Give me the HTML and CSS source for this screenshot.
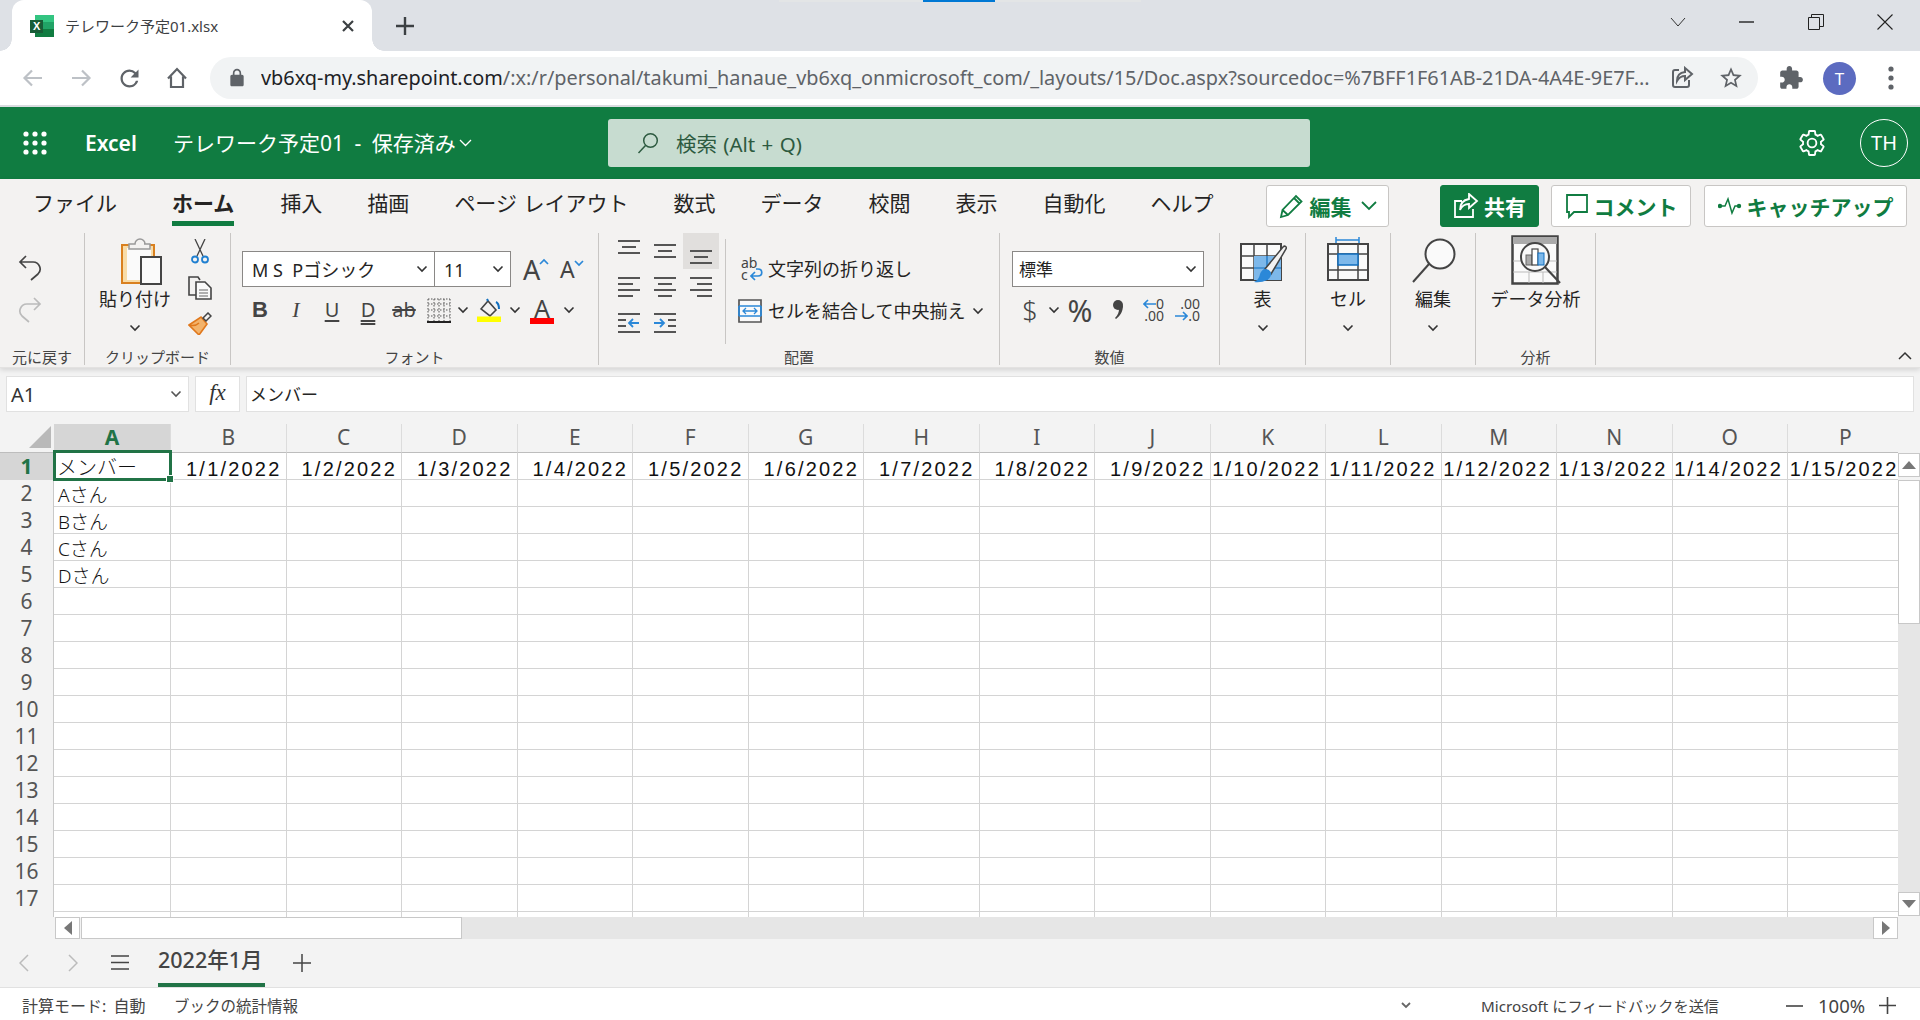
FILE: index.html
```html
<!DOCTYPE html>
<html lang="ja">
<head>
<meta charset="utf-8">
<title>テレワーク予定01.xlsx</title>
<link rel="stylesheet" href="styles.css">
</head>
<body>
<div class="loadbar"><span class="loadbar-fill"></span></div>

<header class="tabstrip">
  <div class="tab">
    <svg class="favicon" width="24" height="22" viewBox="0 0 24 22"><rect x="5" width="19" height="8" fill="#33c481"/><rect x="5" y="7" width="19" height="8" fill="#21a366"/><rect x="5" y="14" width="19" height="8" fill="#107c41"/><rect y="5" width="13" height="13" fill="#185c37"/><text x="3" y="15" class="fav-x">X</text></svg>
    <span class="tab-title">テレワーク予定01.xlsx</span>
    <svg class="tab-close" width="14" height="14" viewBox="0 0 14 14"><path d="M2 2l10 10M12 2L2 12" stroke="#3c4043" stroke-width="2.2"/></svg>
  </div>
  <svg class="newtab" width="18" height="18" viewBox="0 0 18 18"><path d="M9 0v18M0 9h18" stroke="#3c4043" stroke-width="2.4"/></svg>
  <div class="winctl">
    <svg width="16" height="10" viewBox="0 0 16 10"><path d="M1 1l7 8 7-8" fill="none" stroke="#333" stroke-width="1"/></svg>
    <svg width="16" height="16" viewBox="0 0 16 16"><path d="M0 8h15" stroke="#222" stroke-width="1.4"/></svg>
    <svg width="16" height="16" viewBox="0 0 16 16"><path d="M.5 3.5h11v12H.5zM3.500 3.500v-3h12v12h-4" fill="none" stroke="#222"/></svg>
    <svg width="16" height="16" viewBox="0 0 16 16"><path d="M.5.5l15 15M15.500.5l-15 15" stroke="#222" stroke-width="1.100"/></svg>
  </div>
</header>

<nav class="toolbar">
  <svg class="tb tb-back" width="24" height="24" viewBox="0 0 24 24"><path d="M21 12H4M11 4.500L3.500 12l7.500 7.500" fill="none" stroke="#bdc1c6" stroke-width="2.200"/></svg>
  <svg class="tb tb-fwd" width="24" height="24" viewBox="0 0 24 24"><path d="M3 12h17M13 4.500l7.500 7.500-7.500 7.500" fill="none" stroke="#bdc1c6" stroke-width="2.200"/></svg>
  <svg class="tb tb-reload" width="27" height="27" viewBox="0 0 24 24"><path fill="#5f6368" d="M17.650 6.350A7.958 7.958 0 0 0 12 4c-4.420 0-7.990 3.580-7.990 8s3.570 8 7.990 8c3.730 0 6.840-2.550 7.730-6h-2.080A5.990 5.990 0 0 1 12 18c-3.310 0-6-2.690-6-6s2.690-6 6-6c1.660 0 3.140.690 4.220 1.780L13 11h7V4l-2.350 2.350z"/></svg>
  <svg class="tb tb-home" width="24" height="24" viewBox="0 0 24 24"><path d="M3 12.500L12 3l9 9.500M6 10.500V21h12V10.500" fill="none" stroke="#5f6368" stroke-width="2.200"/></svg>
  <div class="omnibox">
    <svg class="lock" width="20" height="20" viewBox="0 0 24 24"><path fill="#5f6368" d="M18 8h-1V6c0-2.760-2.240-5-5-5S7 3.240 7 6v2H6c-1.100 0-2 .9-2 2v10c0 1.100.9 2 2 2h12c1.100 0 2-.9 2-2V10c0-1.100-.9-2-2-2zM9 6c0-1.660 1.340-3 3-3s3 1.340 3 3v2H9V6z"/></svg>
    <span class="url"><span class="url-host">vb6xq-my.sharepoint.com</span>/:x:/r/personal/takumi_hanaue_vb6xq_onmicrosoft_com/_layouts/15/Doc.aspx?sourcedoc=%7BFF1F61AB-21DA-4A4E-9E7F...</span>
    <svg class="omni-share" width="24" height="24" viewBox="0 0 24 24"><path d="M9 4H5a2 2 0 0 0-2 2v13a2 2 0 0 0 2 2h12a2 2 0 0 0 2-2v-5" fill="none" stroke="#5f6368" stroke-width="2"/><path d="M15 2l7 6-7 6v-4c-4 0-6 1.500-8 5 0-5 3-8.500 8-9z" fill="none" stroke="#5f6368" stroke-width="2"/></svg>
    <svg class="omni-star" width="26" height="26" viewBox="0 0 24 24"><path fill="#5f6368" d="M22 9.240l-7.190-.62L12 2 9.190 8.630 2 9.240l5.460 4.730L5.820 21 12 17.270 18.180 21l-1.630-7.030L22 9.240zM12 15.400l-3.760 2.270 1-4.280-3.320-2.880 4.380-.38L12 6.100l1.710 4.040 4.380.38-3.320 2.880 1 4.280L12 15.400z"/></svg>
  </div>
  <svg class="tb-ext" width="26" height="26" viewBox="0 0 24 24"><path fill="#5f6368" d="M20.500 11H19V7c0-1.100-.9-2-2-2h-4V3.500C13 2.120 11.880 1 10.500 1S8 2.120 8 3.500V5H4c-1.100 0-1.990.9-1.990 2v3.800H3.500c1.490 0 2.700 1.210 2.700 2.700s-1.210 2.700-2.700 2.700H2V20c0 1.100.9 2 2 2h3.800v-1.500c0-1.490 1.210-2.700 2.700-2.700 1.490 0 2.700 1.210 2.700 2.700V22H17c1.100 0 2-.9 2-2v-4h1.500c1.380 0 2.500-1.120 2.500-2.500S21.880 11 20.500 11z"/></svg>
  <span class="avatar">T</span>
  <svg class="tb-menu" width="8" height="24" viewBox="0 0 8 24"><circle cx="4" cy="3" r="2.600" fill="#5f6368"/><circle cx="4" cy="12" r="2.600" fill="#5f6368"/><circle cx="4" cy="21" r="2.600" fill="#5f6368"/></svg>
</nav>

<section class="appbar">
  <svg class="waffle" width="24" height="24" viewBox="0 0 24 24" fill="#fff"><circle cx="3" cy="3" r="2.600"/><circle cx="12" cy="3" r="2.600"/><circle cx="21" cy="3" r="2.600"/><circle cx="3" cy="12" r="2.600"/><circle cx="12" cy="12" r="2.600"/><circle cx="21" cy="12" r="2.600"/><circle cx="3" cy="21" r="2.600"/><circle cx="12" cy="21" r="2.600"/><circle cx="21" cy="21" r="2.600"/></svg>
  <span class="appname">Excel</span>
  <span class="docname">テレワーク予定01 - 保存済み</span>
  <svg class="docchev" width="13" height="8" viewBox="0 0 13 8"><path d="M1 1l5.500 5.500L12 1" fill="none" stroke="#fff" stroke-width="1.300"/></svg>
  <div class="search">
    <svg width="24" height="24" viewBox="0 0 24 24"><circle cx="14.500" cy="9.500" r="6.800" fill="none" stroke="#2d5a40" stroke-width="1.500"/><path d="M9.500 14.500L2.500 22" stroke="#2d5a40" stroke-width="1.500"/></svg>
    <span>検索 (Alt + Q)</span>
  </div>
  <svg class="gear" width="30" height="30" viewBox="0 0 24 24"><path fill="none" stroke="#fff" stroke-width="1.500" d="M19.140 12.940c.04-.3.06-.61.06-.94 0-.32-.02-.64-.07-.94l2.030-1.580c.18-.14.23-.41.12-.61l-1.920-3.320c-.12-.22-.37-.29-.59-.22l-2.390.96c-.5-.38-1.030-.7-1.620-.94l-.36-2.540c-.04-.24-.24-.41-.48-.41h-3.840c-.24 0-.43.17-.47.41l-.36 2.540c-.59.24-1.130.57-1.620.94l-2.390-.96c-.22-.08-.47 0-.59.22L2.740 8.870c-.12.21-.08.47.12.61l2.030 1.580c-.05.3-.09.63-.09.94s.02.64.07.94l-2.030 1.580c-.18.14-.23.41-.12.61l1.920 3.320c.12.22.37.29.59.22l2.390-.96c.5.38 1.030.7 1.620.94l.36 2.540c.05.24.24.41.48.41h3.840c.24 0 .44-.17.47-.41l.36-2.540c.59-.24 1.130-.56 1.620-.94l2.390.96c.22.08.47 0 .59-.22l1.920-3.320c.12-.22.07-.47-.12-.61l-2.010-1.580z"/><circle cx="12" cy="12" r="3.500" fill="none" stroke="#fff" stroke-width="1.500"/></svg>
  <span class="me">TH</span>
</section>

<section class="ribbon">
  <div class="rtabs">
    <span class="rtab rtab-first">ファイル</span>
    <span class="rtab rtab-on">ホーム</span>
    <span class="rtab">挿入</span>
    <span class="rtab">描画</span>
    <span class="rtab rtab-page">ページ レイアウト</span>
    <span class="rtab">数式</span>
    <span class="rtab">データ</span>
    <span class="rtab">校閲</span>
    <span class="rtab">表示</span>
    <span class="rtab">自動化</span>
    <span class="rtab">ヘルプ</span>
    <div class="ractions">
      <button class="act act-edit"><svg width="26" height="26" viewBox="0 0 26 26"><path d="M2 24l1.500-7L17 3l5.500 5.500L9 22zM3.500 17L9 22M15 5l5.500 5.500" fill="none" stroke="#107c41" stroke-width="1.800"/></svg>編集<svg class="act-chev" width="16" height="10" viewBox="0 0 16 10"><path d="M1 1l7 7 7-7" fill="none" stroke="#107c41" stroke-width="1.800"/></svg></button>
      <button class="act act-share"><svg width="26" height="26" viewBox="0 0 26 26"><path d="M9 8H2v16h18v-8" fill="none" stroke="#fff" stroke-width="1.800"/><path d="M16 1l8 7-8 7v-4c-4 0-7 1.500-9 6 0-6 3-10 9-11z" fill="none" stroke="#fff" stroke-width="1.800"/></svg>共有</button>
      <button class="act act-comment"><svg width="24" height="26" viewBox="0 0 24 26"><path d="M2 2h20v17H9l-5 5v-5H2z" fill="none" stroke="#107c41" stroke-width="1.800"/></svg>コメント</button>
      <button class="act act-catch"><svg width="24" height="18" viewBox="0 0 24 18"><path d="M1 9h6l3-7 4 14 3-7h6" fill="none" stroke="#107c41" stroke-width="1.500"/><circle cx="2" cy="9" r="2.200" fill="#107c41"/><circle cx="21" cy="9" r="2.200" fill="#107c41"/></svg>キャッチアップ</button>
    </div>
  </div>

  <div class="rgroups">
    <div class="grp grp-undo">
      <div class="grp-body undo-body">
        <svg width="24" height="26" viewBox="0 0 24 26"><path d="M8 1L2 7l6 6M2 7h13a7 7 0 0 1 5 12l-7 6" fill="none" stroke="#444" stroke-width="1.700"/></svg>
        <svg width="24" height="26" viewBox="0 0 24 26"><path d="M16 1l6 6-6 6M22 7H9a7 7 0 0 0-5 12l7 6" fill="none" stroke="#bbb" stroke-width="1.700"/></svg>
      </div>
      <div class="grp-label">元に戻す</div>
    </div>

    <div class="grp grp-clip">
      <div class="grp-body clip-body">
        <div class="tall tall-paste">
          <svg class="tall-ico paste-ico" width="42" height="52" viewBox="0 0 42 52"><rect x="2" y="12" width="32" height="38" fill="#f8dca8" stroke="#d9801f" stroke-width="2"/><rect x="7" y="15" width="24" height="32" fill="#fafafa"/><path d="M12 15v-5h6a5 5 0 0 1 10 0h-1 6v5z" transform="translate(-3 1)" fill="#f3f2f1" stroke="#999" stroke-width="1.500"/><rect x="21" y="24" width="20" height="27" fill="#fafafa" stroke="#444" stroke-width="2"/></svg>
          <span class="tall-label">貼り付け</span>
          <svg class="chev" width="12" height="8" viewBox="0 0 12 8"><path d="M1.500 1.500L6 6l4.500-4.500" fill="none" stroke="#333" stroke-width="1.600"/></svg>
        </div>
        <div class="clip-small">
          <svg width="18" height="25" viewBox="0 0 18 25"><path d="M4 0l8 17M14 0L6 17" stroke="#444" stroke-width="1.300"/><circle cx="4" cy="20.500" r="3" fill="none" stroke="#1f7fd0" stroke-width="1.800"/><circle cx="14" cy="20.500" r="3" fill="none" stroke="#1f7fd0" stroke-width="1.800"/></svg>
          <svg width="24" height="24" viewBox="0 0 24 24"><path d="M8 19H1V1h9l2 3" fill="none" stroke="#444" stroke-width="1.600"/><path d="M8 6h9l6 6v11H8z" fill="#fafafa" stroke="#444" stroke-width="1.600"/><path d="M11 14h9M11 17h9M11 20h9" stroke="#666" stroke-width="1.200"/></svg>
          <svg width="24" height="23" viewBox="0 0 24 23"><path d="M1 13L13 5l6 7-8 11z" fill="#f3b36b" stroke="#e0781c" stroke-width="1.600"/><path d="M1 13c4 1 7 1 10-2" fill="none" stroke="#e0781c" stroke-width="1.500"/><path d="M15 6l5-5 3 3-5 5z" fill="#f3f2f1" stroke="#444" stroke-width="1.500"/></svg>
        </div>
      </div>
      <div class="grp-label">クリップボード</div>
    </div>

    <div class="grp grp-font">
      <div class="grp-body font-body">
        <div class="font-row1">
          <div class="combo combo-font"><span class="combo-text">M S  Pゴシック</span><svg class="chev" width="12" height="8" viewBox="0 0 12 8"><path d="M1.500 1.500L6 6l4.500-4.500" fill="none" stroke="#333" stroke-width="1.600"/></svg></div>
          <div class="combo combo-size"><span class="combo-text">11</span><svg class="chev" width="12" height="8" viewBox="0 0 12 8"><path d="M1.500 1.500L6 6l4.500-4.500" fill="none" stroke="#333" stroke-width="1.600"/></svg></div>
          <span class="grow grow-up">A<svg width="10" height="7" viewBox="0 0 10 7"><path d="M1 6l4-4 4 4" fill="none" stroke="#2b88d8" stroke-width="1.700"/></svg></span>
          <span class="grow grow-down">A<svg width="10" height="7" viewBox="0 0 10 7"><path d="M1 1l4 4 4-4" fill="none" stroke="#2b88d8" stroke-width="1.700"/></svg></span>
        </div>
        <div class="font-row2">
          <span class="fbtn f-b">B</span>
          <span class="fbtn f-i">I</span>
          <span class="fbtn f-u">U</span>
          <span class="fbtn f-d">D</span>
          <span class="fbtn f-s">ab</span>
          <span class="fbtn f-ico"><svg width="24" height="25" viewBox="0 0 24 25"><path d="M1 1h22M1 6h22M1 12h22M1 18h22M1 1v22M7 1v22M12 1v22M17 1v22M23 1v22" fill="none" stroke="#555" stroke-width="1" stroke-dasharray="1.500 1.500"/><path d="M0 24h24" stroke="#222" stroke-width="2"/></svg></span>
          <svg class="chev fchev" width="12" height="8" viewBox="0 0 12 8"><path d="M1.500 1.500L6 6l4.500-4.500" fill="none" stroke="#333" stroke-width="1.600"/></svg>
          <span class="fbtn f-ico f-fill"><svg width="24" height="24" viewBox="0 0 24 24"><path d="M4 11l7-8 8 9-6 6z" fill="none" stroke="#444" stroke-width="1.600"/><path d="M11 3l-1-2M19 4c2 1 3 3 3 7" fill="none" stroke="#106ebe" stroke-width="2"/><path d="M0 18.500h24V24H0z" fill="#ffff00"/></svg></span>
          <svg class="chev fchev" width="12" height="8" viewBox="0 0 12 8"><path d="M1.500 1.500L6 6l4.500-4.500" fill="none" stroke="#333" stroke-width="1.600"/></svg>
          <span class="fbtn f-color">A</span>
          <svg class="chev fchev" width="12" height="8" viewBox="0 0 12 8"><path d="M1.500 1.500L6 6l4.500-4.500" fill="none" stroke="#333" stroke-width="1.600"/></svg>
        </div>
      </div>
      <div class="grp-label">フォント</div>
    </div>

    <div class="grp grp-align">
      <div class="grp-body align-body">
        <div class="align-grid">
          <span class="abtn"><svg width="24" height="30" viewBox="0 0 24 30"><path d="M1 5h22M5 11h14M1 17h22" stroke="#555" stroke-width="2"/></svg></span>
          <span class="abtn"><svg width="24" height="30" viewBox="0 0 24 30"><path d="M1 9h22M5 15h14M1 21h22" stroke="#555" stroke-width="2"/></svg></span>
          <span class="abtn abtn-on"><svg width="24" height="30" viewBox="0 0 24 30"><path d="M1 15h22M5 21h14M1 27h22" stroke="#555" stroke-width="2"/></svg></span>
          <span class="abtn"><svg width="24" height="24" viewBox="0 0 24 24"><path d="M1 3h22M1 9h15M1 15h22M1 21h15" stroke="#555" stroke-width="2"/></svg></span>
          <span class="abtn"><svg width="24" height="24" viewBox="0 0 24 24"><path d="M1 3h22M5 9h14M1 15h22M5 21h14" stroke="#555" stroke-width="2"/></svg></span>
          <span class="abtn"><svg width="24" height="24" viewBox="0 0 24 24"><path d="M1 3h22M8 9h15M1 15h22M8 21h15" stroke="#555" stroke-width="2"/></svg></span>
          <span class="abtn"><svg width="24" height="24" viewBox="0 0 24 24"><path d="M1 3h22M1 21h22M1 9h8M1 15h8" stroke="#555" stroke-width="2"/><path d="M22 12H12M16 8l-4 4 4 4" fill="none" stroke="#2b88d8" stroke-width="1.800"/></svg></span>
          <span class="abtn"><svg width="24" height="24" viewBox="0 0 24 24"><path d="M1 3h22M1 21h22M15 9h8M15 15h8" stroke="#555" stroke-width="2"/><path d="M1 12h10M7 8l4 4-4 4" fill="none" stroke="#2b88d8" stroke-width="1.800"/></svg></span>
        </div>
        <div class="wrap-col">
          <div class="wrap-row wrap-text"><span class="abc">ab<br>c<svg width="14" height="14" viewBox="0 0 14 14"><path d="M2 9h6c5 0 5-7 0-7H6M5 5L1 9l4 4" fill="none" stroke="#2b88d8" stroke-width="1.700"/></svg></span><span class="lbl">文字列の折り返し</span></div>
          <div class="wrap-row wrap-merge"><svg width="24" height="24" viewBox="0 0 24 24"><path d="M1 1h22v22H1z" fill="#fafafa" stroke="#555" stroke-width="1.700"/><path d="M1 7h22M1 17h22" stroke="#2b88d8" stroke-width="1.700"/><path d="M1 7v10M23 7v10" stroke="#2b88d8" stroke-width="1.700"/><path d="M5 12h14M8 9l-3 3 3 3M16 9l3 3-3 3" fill="none" stroke="#2b88d8" stroke-width="1.300"/></svg><span class="lbl">セルを結合して中央揃え</span><svg class="chev" width="12" height="8" viewBox="0 0 12 8"><path d="M1.500 1.500L6 6l4.500-4.500" fill="none" stroke="#333" stroke-width="1.600"/></svg></div>
        </div>
      </div>
      <div class="grp-label">配置</div>
    </div>

    <div class="grp grp-num">
      <div class="grp-body num-body">
        <div class="combo combo-num"><span class="combo-text">標準</span><svg class="chev" width="12" height="8" viewBox="0 0 12 8"><path d="M1.500 1.500L6 6l4.500-4.500" fill="none" stroke="#333" stroke-width="1.600"/></svg></div>
        <div class="num-row">
          <span class="n-dollar">$</span>
          <svg class="chev" width="12" height="8" viewBox="0 0 12 8"><path d="M1.500 1.500L6 6l4.500-4.500" fill="none" stroke="#333" stroke-width="1.600"/></svg>
          <span class="n-pct">%</span>
          <svg class="n-comma" width="14" height="24" viewBox="0 0 14 24"><circle cx="7" cy="7" r="5" fill="#444"/><path d="M12 7c0 7-3 11-7 14l-1-1c3-3 4-6 4-9z" fill="#444"/></svg>
          <div class="dec dec-a">
            <div class="dec-row"><svg width="13" height="10" viewBox="0 0 13 10"><path d="M13 5H1M5 1L1 5l4 4" fill="none" stroke="#2b88d8" stroke-width="1.600"/></svg><span>0</span></div>
            <div class="dec-row"><span>.00</span></div>
          </div>
          <div class="dec dec-b">
            <div class="dec-row"><span>.00</span></div>
            <div class="dec-row"><svg width="13" height="10" viewBox="0 0 13 10"><path d="M0 5h12M8 1l4 4-4 4" fill="none" stroke="#2b88d8" stroke-width="1.600"/></svg><span>.0</span></div>
          </div>
        </div>
      </div>
      <div class="grp-label">数値</div>
    </div>

    <div class="grp grp-tall grp-table">
      <div class="grp-body">
        <div class="tall">
          <svg class="tall-ico" width="48" height="52" viewBox="0 0 48 52"><rect x="2" y="11" width="40" height="36" fill="#fafafa" stroke="#444" stroke-width="2"/><path d="M15 11v36M28 11v36M2 23h40M2 35h40" stroke="#444" stroke-width="1.500"/><rect x="15" y="23" width="27" height="24" fill="#7db8ea"/><path d="M28 23v24M15 35h27" stroke="#106ebe" stroke-width="1.200"/><path d="M26 36L44 14c2-2 4 0 3 2L32 41z" fill="#f3f2f1" stroke="#444" stroke-width="1.500"/><path d="M26 36c4 0 7 3 6 6-1 5-8 8-17 7 4-2 5-4 6-8 1-3 3-5 5-5z" fill="#2b88d8"/></svg>
          <span class="tall-label">表</span>
          <svg class="chev" width="12" height="8" viewBox="0 0 12 8"><path d="M1.500 1.500L6 6l4.500-4.500" fill="none" stroke="#333" stroke-width="1.600"/></svg>
        </div>
      </div>
      <div class="grp-label">&nbsp;</div>
    </div>

    <div class="grp grp-tall grp-cell">
      <div class="grp-body">
        <div class="tall">
          <svg class="tall-ico" width="44" height="52" viewBox="0 0 44 52"><path d="M10 4v6M33 4v6M10 7h23" fill="none" stroke="#2b88d8" stroke-width="1.500"/><rect x="2" y="11" width="40" height="36" fill="#fafafa" stroke="#444" stroke-width="2"/><path d="M12 11v36M32 11v36M2 21h40M2 37h40" stroke="#444" stroke-width="1.500"/><rect x="12" y="21" width="20" height="11" fill="#7db8ea" stroke="#106ebe" stroke-width="1.500"/></svg>
          <span class="tall-label">セル</span>
          <svg class="chev" width="12" height="8" viewBox="0 0 12 8"><path d="M1.500 1.500L6 6l4.500-4.500" fill="none" stroke="#333" stroke-width="1.600"/></svg>
        </div>
      </div>
      <div class="grp-label">&nbsp;</div>
    </div>

    <div class="grp grp-tall grp-edit">
      <div class="grp-body">
        <div class="tall">
          <svg class="tall-ico" width="46" height="52" viewBox="0 0 46 52"><circle cx="30" cy="21" r="14.500" fill="#fafafa" stroke="#444" stroke-width="2"/><path d="M19 31L3 49" stroke="#444" stroke-width="2"/></svg>
          <span class="tall-label">編集</span>
          <svg class="chev" width="12" height="8" viewBox="0 0 12 8"><path d="M1.500 1.500L6 6l4.500-4.500" fill="none" stroke="#333" stroke-width="1.600"/></svg>
        </div>
      </div>
      <div class="grp-label">&nbsp;</div>
    </div>

    <div class="grp grp-tall grp-ana">
      <div class="grp-body">
        <div class="tall">
          <svg class="tall-ico" width="50" height="52" viewBox="0 0 50 52"><rect x="1.500" y="3.500" width="45" height="47" fill="#fafafa" stroke="#444" stroke-width="2.500"/><rect x="2" y="4" width="44" height="7" fill="#aaa"/><path d="M2 28h44M2 39h44M18 39v11M32 39v11" stroke="#bbb"/><circle cx="24" cy="24" r="14" fill="#f8f8f8" stroke="#444" stroke-width="2"/><path d="M34 34l15 16" stroke="#444" stroke-width="2.200"/><rect x="15" y="22" width="6" height="10" fill="#aaa" stroke="#666"/><rect x="21" y="16" width="6" height="16" fill="#fff" stroke="#444" stroke-width="1.200"/><rect x="27" y="20" width="6" height="12" fill="#7db8ea" stroke="#106ebe"/></svg>
          <span class="tall-label">データ分析</span>
        </div>
      </div>
      <div class="grp-label">分析</div>
    </div>

    <div class="collapse"><svg width="14" height="9" viewBox="0 0 14 9"><path d="M1 8l6-6 6 6" fill="none" stroke="#333" stroke-width="1.500"/></svg></div>
  </div>
</section>

<section class="fbar">
  <div class="namebox"><span>A1</span><svg class="chev" width="12" height="8" viewBox="0 0 12 8"><path d="M1.500 1.500L6 6l4.500-4.500" fill="none" stroke="#555" stroke-width="1.600"/></svg></div>
  <div class="fxbtn">fx</div>
  <div class="finput">メンバー</div>
</section>

<main class="book">
  <div class="sheet">
    <div class="corner"><svg width="22" height="22" viewBox="0 0 22 22"><path d="M22 0v22H0z" fill="#b9b9b9"/></svg></div>
    <div class="ch ch-on">A</div><div class="ch">B</div><div class="ch">C</div><div class="ch">D</div><div class="ch">E</div><div class="ch">F</div><div class="ch">G</div><div class="ch">H</div><div class="ch">I</div><div class="ch">J</div><div class="ch">K</div><div class="ch">L</div><div class="ch">M</div><div class="ch">N</div><div class="ch">O</div><div class="ch">P</div>

    <div class="rh rh-on">1</div><div class="c c-jp">メンバー</div><div class="c c-d">1/1/2022</div><div class="c c-d">1/2/2022</div><div class="c c-d">1/3/2022</div><div class="c c-d">1/4/2022</div><div class="c c-d">1/5/2022</div><div class="c c-d">1/6/2022</div><div class="c c-d">1/7/2022</div><div class="c c-d">1/8/2022</div><div class="c c-d">1/9/2022</div><div class="c c-d">1/10/2022</div><div class="c c-d">1/11/2022</div><div class="c c-d">1/12/2022</div><div class="c c-d">1/13/2022</div><div class="c c-d">1/14/2022</div><div class="c c-d">1/15/2022</div>

    <div class="rh">2</div><div class="c c-t">Aさん</div><i></i><i></i><i></i><i></i><i></i><i></i><i></i><i></i><i></i><i></i><i></i><i></i><i></i><i></i><i></i>
    <div class="rh">3</div><div class="c c-t">Bさん</div><i></i><i></i><i></i><i></i><i></i><i></i><i></i><i></i><i></i><i></i><i></i><i></i><i></i><i></i><i></i>
    <div class="rh">4</div><div class="c c-t">Cさん</div><i></i><i></i><i></i><i></i><i></i><i></i><i></i><i></i><i></i><i></i><i></i><i></i><i></i><i></i><i></i>
    <div class="rh">5</div><div class="c c-t">Dさん</div><i></i><i></i><i></i><i></i><i></i><i></i><i></i><i></i><i></i><i></i><i></i><i></i><i></i><i></i><i></i>
    <div class="rh">6</div><i></i><i></i><i></i><i></i><i></i><i></i><i></i><i></i><i></i><i></i><i></i><i></i><i></i><i></i><i></i><i></i>
    <div class="rh">7</div><i></i><i></i><i></i><i></i><i></i><i></i><i></i><i></i><i></i><i></i><i></i><i></i><i></i><i></i><i></i><i></i>
    <div class="rh">8</div><i></i><i></i><i></i><i></i><i></i><i></i><i></i><i></i><i></i><i></i><i></i><i></i><i></i><i></i><i></i><i></i>
    <div class="rh">9</div><i></i><i></i><i></i><i></i><i></i><i></i><i></i><i></i><i></i><i></i><i></i><i></i><i></i><i></i><i></i><i></i>
    <div class="rh">10</div><i></i><i></i><i></i><i></i><i></i><i></i><i></i><i></i><i></i><i></i><i></i><i></i><i></i><i></i><i></i><i></i>
    <div class="rh">11</div><i></i><i></i><i></i><i></i><i></i><i></i><i></i><i></i><i></i><i></i><i></i><i></i><i></i><i></i><i></i><i></i>
    <div class="rh">12</div><i></i><i></i><i></i><i></i><i></i><i></i><i></i><i></i><i></i><i></i><i></i><i></i><i></i><i></i><i></i><i></i>
    <div class="rh">13</div><i></i><i></i><i></i><i></i><i></i><i></i><i></i><i></i><i></i><i></i><i></i><i></i><i></i><i></i><i></i><i></i>
    <div class="rh">14</div><i></i><i></i><i></i><i></i><i></i><i></i><i></i><i></i><i></i><i></i><i></i><i></i><i></i><i></i><i></i><i></i>
    <div class="rh">15</div><i></i><i></i><i></i><i></i><i></i><i></i><i></i><i></i><i></i><i></i><i></i><i></i><i></i><i></i><i></i><i></i>
    <div class="rh">16</div><i></i><i></i><i></i><i></i><i></i><i></i><i></i><i></i><i></i><i></i><i></i><i></i><i></i><i></i><i></i><i></i>
    <div class="rh">17</div><i></i><i></i><i></i><i></i><i></i><i></i><i></i><i></i><i></i><i></i><i></i><i></i><i></i><i></i><i></i><i></i>
    <div class="rh rh-empty"></div><i></i><i></i><i></i><i></i><i></i><i></i><i></i><i></i><i></i><i></i><i></i><i></i><i></i><i></i><i></i><i></i>

    <div class="selection"><span class="sel-handle"></span></div>
  </div>
  <div class="vbar">
    <div class="sb-btn sb-v"><svg width="14" height="8" viewBox="0 0 14 8"><path d="M7 0l7 8H0z" fill="#777"/></svg></div>
    <div class="vthumb"></div>
    <div class="vtrack"></div>
    <div class="sb-btn sb-v"><svg width="14" height="8" viewBox="0 0 14 8"><path d="M7 8L0 0h14z" fill="#777"/></svg></div>
  </div>
</main>

<div class="hbar">
  <div class="sb-btn sb-h"><svg width="8" height="14" viewBox="0 0 8 14"><path d="M0 7l8-7v14z" fill="#777"/></svg></div>
  <div class="hthumb"></div>
  <div class="htrack"></div>
  <div class="sb-btn sb-h"><svg width="8" height="14" viewBox="0 0 8 14"><path d="M8 7L0 0v14z" fill="#777"/></svg></div>
</div>

<div class="sheetbar">
  <svg class="st-prev" width="10" height="18" viewBox="0 0 10 18"><path d="M9 1L1 9l8 8" fill="none" stroke="#bbb" stroke-width="1.500"/></svg>
  <svg class="st-next" width="10" height="18" viewBox="0 0 10 18"><path d="M1 1l8 8-8 8" fill="none" stroke="#bbb" stroke-width="1.500"/></svg>
  <svg class="st-menu" width="18" height="15" viewBox="0 0 18 15"><path d="M0 1h18M0 7.500h18M0 14h18" stroke="#444" stroke-width="1.600"/></svg>
  <span class="st-tab">2022年1月</span>
  <svg class="st-add" width="18" height="18" viewBox="0 0 18 18"><path d="M9 0v18M0 9h18" stroke="#444" stroke-width="1.500"/></svg>
</div>

<footer class="status">
  <span class="st-mode">計算モード: 自動</span>
  <span class="st-info">ブックの統計情報</span>
  <svg class="st-chev" width="10" height="7" viewBox="0 0 10 7"><path d="M1 1l4 4 4-4" fill="none" stroke="#666" stroke-width="1.800"/></svg>
  <span class="st-fb">Microsoft にフィードバックを送信</span>
  <svg class="st-minus" width="17" height="2" viewBox="0 0 17 2"><path d="M0 1h17" stroke="#444" stroke-width="1.600"/></svg>
  <span class="st-zoom">100%</span>
  <svg class="st-plus" width="17" height="17" viewBox="0 0 17 17"><path d="M8.500 0v17M0 8.500h17" stroke="#444" stroke-width="1.600"/></svg>
</footer>
</body>
</html>
```

FILE: styles.css
```css
* { box-sizing: border-box; }
html, body { margin: 0; height: 100%; }
body {
  width: 1920px; height: 1020px; overflow: hidden; background: #fff; position: relative;
  font-family: "Noto Sans", "Noto Sans CJK JP", sans-serif; color: #252423;
}
svg { display: block; flex: none; }

/* Browser chrome */
.loadbar { position: absolute; left: 779px; top: 0; width: 362px; height: 2px; background: #e3e5e6; z-index: 3; }
.loadbar-fill { display: block; margin-left: 144px; width: 72px; height: 2px; background: #0078d4; }
.tabstrip { height: 51px; background: #dee1e6; display: flex; align-items: flex-start; padding-left: 12px; }
.tab { position: relative; width: 360px; height: 51px; background: #fff; border-radius: 12px 12px 0 0; display: flex; align-items: center; padding-left: 18px; }
.tab::before, .tab::after { content: ""; position: absolute; bottom: 0; width: 12px; height: 12px; }
.tab::before { left: -12px; background: radial-gradient(circle at 0 0, #dee1e6 11.5px, #fff 12px); }
.tab::after { right: -12px; background: radial-gradient(circle at 100% 0, #dee1e6 11.5px, #fff 12px); }
.fav-x { font: bold 11px "Liberation Sans", sans-serif; fill: #fff; }
.tab-title { margin-left: 11px; font-size: 15px; line-height: 20px; color: #3c4043; width: 276px; white-space: nowrap; }
.newtab { margin: 17px 0 0 24px; }
.winctl { margin-left: auto; display: flex; align-items: center; gap: 53px; padding: 14px 27px 0 0; height: 30px; }
.toolbar { height: 56px; border-bottom: 2px solid #dadce0; background: #fff; display: flex; align-items: center; padding-left: 21px; }
.tb-fwd { margin-left: 24px; }
.tb-reload { margin-left: 23px; }
.tb-home { margin-left: 22px; }
.omnibox { margin-left: 21px; width: 1548px; height: 42px; border-radius: 21px; background: #f1f3f4; display: flex; align-items: center; padding-left: 17px; }
.url { margin-left: 14px; width: 1388px; white-space: nowrap; overflow: hidden; font-size: 19.860px; line-height: 28px; color: #5f6368; }
.url-host { color: #202124; }
.omni-share { margin-left: 21px; }
.omni-star { margin-left: 24px; }
.tb-ext { margin-left: 20px; }
.avatar { margin-left: 19px; width: 33px; height: 33px; border-radius: 50%; background: #5c6bc0; color: #fff; font-size: 17px; line-height: 33px; text-align: center; }
.tb-menu { margin-left: 31px; }

/* App bar */
.appbar { height: 72px; background: #107c41; color: #fff; display: flex; align-items: center; padding-left: 23px; }
.appname { margin-left: 38px; font-size: 21px; font-weight: 600; line-height: 28px; width: 88px; }
.docname { font-size: 21px; line-height: 28px; width: 285px; white-space: pre; word-spacing: 5px; }
.docchev { margin-left: 1px; }
.search { margin-left: 136px; width: 702px; height: 48px; border-radius: 3px; background: #c7dcd0; display: flex; align-items: center; padding-left: 28px; color: #2d5a40; font-size: 20.500px; word-spacing: 1px; }
.search span { margin-left: 16px; }
.gear { margin-left: 487px; }
.me { margin-left: 33px; width: 48px; height: 48px; border: 1px solid #fff; border-radius: 50%; text-align: center; line-height: 46px; font-size: 20px; }

/* Ribbon */
.ribbon { height: 189px; background: #f3f2f1; box-shadow: 0 2px 5px rgba(0,0,0,.13); position: relative; z-index: 1; border-bottom: 1px solid #e3e2e1; }
.rtabs { height: 54px; display: flex; align-items: flex-start; padding: 8px 13px 0 33px; gap: 45px; font-size: 21px; }
.rtab { line-height: 32px; height: 39px; padding-bottom: 2px; white-space: pre; }
.rtab-first { margin-right: 10px; }
.rtab-on { font-weight: 700; border-bottom: 5px solid #107c41; height: 39px; margin-right: 1px; }
.rtab-page { word-spacing: 1px; }
.ractions { margin-left: auto; display: flex; height: 42px; margin-top: -2px; }
.act { height: 42px; border: 1px solid #c8c6c4; border-radius: 3px; background: #fff; color: #107c41; font: 700 21px/1 "Noto Sans CJK JP", sans-serif; display: flex; align-items: center; justify-content: center; gap: 5px; padding: 0; margin-left: 12px; }
.act-edit { width: 123px; margin-left: 0; margin-right: 39px; }
.act-chev { margin-left: 4px; }
.act-share { width: 99px; background: #107c41; border-color: #107c41; color: #fff; }
.act-comment { width: 140px; }
.act-catch { width: 203px; margin-left: 13px; }
.rgroups { height: 132px; margin-top: 0; display: flex; }
.grp { height: 132px; display: flex; flex-direction: column; border-right: 1px solid #c8c6c4; }
.grp-body { flex: 1; min-height: 0; }
.grp-label { height: 16px; line-height: 16px; font-size: 15px; text-align: center; color: #444; margin-bottom: 0; }
.grp-undo { width: 85px; }
.grp-clip { width: 146px; }
.grp-font { width: 368px; }
.grp-align { width: 401px; }
.grp-num { width: 220px; }
.grp-table { width: 86px; }
.grp-cell { width: 85px; }
.grp-edit { width: 85px; }
.grp-ana { width: 120px; }
.undo-body { padding: 22px 0 0 18px; display: flex; flex-direction: column; gap: 16px; }
.clip-body { display: flex; }
.tall { display: flex; flex-direction: column; align-items: center; width: 100%; }
.tall-paste { width: 100px; }
.tall-ico { height: 52px; }
.paste-ico { margin-left: 12px; }
.tall-label { height: 28px; line-height: 28px; font-size: 18px; white-space: nowrap; }
.tall .chev { margin-top: 11px; }
.clip-small { width: 30px; display: flex; flex-direction: column; align-items: center; padding-top: 6px; gap: 12px; }
.combo { background: #fff; border: 1px solid #8a8886; display: flex; align-items: center; justify-content: space-between; height: 36px; font-size: 18px; padding: 0 6px 0 9px; }
.combo-text { white-space: pre; line-height: 24px; padding-top: 2px; }
.combo-font { width: 193px; }
.combo-size { width: 76px; border-left: 0; }
.combo-num { width: 192px; padding-left: 6px; font-size: 17px; }
.font-body { padding: 18px 0 0 11px; }
.font-row1 { display: flex; align-items: center; }
.grow { display: flex; align-items: flex-start; color: #444; line-height: 1; }
.grow svg { margin-top: 2px; margin-left: -1px; }
.grow-up { margin-left: 12px; font-size: 27px; width: 37px; }
.grow-down { font-size: 23px; }
.font-row2 { display: flex; align-items: center; height: 36px; margin-top: 5px; margin-left: 0; }
.fbtn { width: 36px; height: 36px; display: flex; align-items: center; justify-content: center; color: #444; line-height: 1; }
.f-b { font: bold 22px "Liberation Sans", sans-serif; }
.f-i { font: italic 22px "Liberation Serif", serif; }
.f-u { font-size: 20px; text-decoration: underline; text-underline-offset: 3px; }
.f-d { font-size: 20px; text-decoration: underline double; text-underline-offset: 3px; }
.f-s { font-size: 20px; text-decoration: line-through; }
.f-ico { width: 34px; }
.fchev { margin: 0 1px; }
.f-fill { margin-left: 2px; margin-right: 2px; }
.f-color { position: relative; font-size: 25px; width: 36px; margin-left: 2px; margin-right: 2px; align-items: flex-start; padding-top: 4px; border-bottom: 0; background: linear-gradient(#f00, #f00) center 26px / 24px 6px no-repeat; }
.align-body { display: flex; padding-left: 12px; }
.align-grid { width: 108px; height: 108px; display: grid; grid-template-columns: repeat(3, 36px); grid-template-rows: 36px 36px 36px; }
.abtn { display: flex; align-items: flex-start; justify-content: center; padding-top: 3px; }
.abtn-on { background: #e1dfdd; }
.align-grid .abtn:nth-child(n+4) { padding-top: 6px; }
.wrap-col { margin: 6px 0 0 6px; height: 105px; border-left: 1px solid #c8c6c4; padding-left: 12px; display: flex; flex-direction: column; gap: 14px; font-size: 18px; }
.wrap-row { display: flex; align-items: center; height: 28px; white-space: nowrap; line-height: 24px; }
.lbl { margin-left: 6px; }
.wrap-text { margin-top: 16px; margin-left: 3px; }
.wrap-text .lbl { margin-left: 3px; }
.wrap-merge .chev { margin-left: 7px; }
.abc { position: relative; display: block; width: 24px; height: 26px; font-size: 14px; line-height: 12px; color: #444; padding-top: 1px; }
.abc svg { position: absolute; left: 9px; top: 11px; }
.num-body { padding: 18px 0 0 12px; }
.num-row { display: flex; align-items: center; height: 38px; margin-top: 4px; color: #444; }
.n-dollar { font-size: 27px; width: 36px; margin-right: 0; text-align: center; font-weight: 300; }
.n-pct { font-size: 30px; width: 40px; margin-left: 0; text-align: center; }
.n-comma { margin-left: 11px; }
.dec { width: 25px; font-size: 14px; line-height: 12px; }
.dec-a { margin-left: 14px; }
.dec-b { margin-left: 11px; }
.dec-row { display: flex; justify-content: flex-end; align-items: center; height: 12px; white-space: nowrap; }
.collapse { flex: 1; display: flex; align-items: flex-end; justify-content: flex-end; padding: 0 8px 5px 0; }

/* Formula bar */
.fbar { height: 56px; background: #f3f3f3; display: flex; padding: 8px 6px 12px; gap: 6px; }
.namebox, .fxbtn, .finput { height: 36px; background: #fff; border: 1px solid #e1e1e1; }
.namebox { width: 183px; display: flex; align-items: center; justify-content: space-between; padding: 0 6px 0 4px; font-size: 20px; color: #333; }
.fxbtn { width: 45px; text-align: center; font: italic 400 23px/32px "Liberation Serif", serif; color: #333; }
.finput { flex: 1; padding-left: 3px; font-size: 17px; line-height: 36px; }

/* Sheet */
.book { height: 493px; display: flex; background: #f3f3f3; }
.sheet { position: relative; width: 1898px; height: 493px; overflow: hidden; display: grid; grid-template-columns: 54px 117px repeat(15, 115.500px); grid-template-rows: 29px repeat(18, 27px); background: #fff; }
.corner { background: #f3f3f3; padding: 2px 0 0 29px; border-bottom: 1px solid #bdbdbd; }
.ch { background: #f3f3f3; border-right: 1px solid #dcdcdc; border-bottom: 1px solid #bdbdbd; text-align: center; font-size: 21px; line-height: 26px; color: #555; }
.ch-on { background: #d6d6d6; color: #217346; font-weight: 700; }
.rh { background: #f3f3f3; border-right: 1px solid #c9c9c9; text-align: center; font-size: 21px; line-height: 27px; color: #555; }
.rh-on { background: #d6d6d6; color: #217346; font-weight: 700; }
.rh-empty { background: #f3f3f3; }
.c, .sheet > i { border-right: 1px solid #d4d4d4; border-bottom: 1px solid #d4d4d4; white-space: nowrap; overflow: hidden; }
.c { font-size: 19px; line-height: 30px; color: #111; font-weight: 300; }
.c-jp { padding-left: 3px; font-size: 20px; }
.c-t { padding-left: 4px; }
.c-d { text-align: right; padding-right: 4px; font: 20px/32px "Liberation Sans", sans-serif; letter-spacing: 2.200px; }
.selection { position: absolute; left: 53px; top: 26px; width: 119px; height: 31px; border: 3px solid #217346; }
.sel-handle { position: absolute; right: -5px; bottom: -5px; width: 8px; height: 8px; background: #217346; border: 1px solid #fff; }

.vbar { width: 22px; padding-top: 29px; display: flex; flex-direction: column; }
.sb-btn { background: #fff; border: 1px solid #c8c8c8; display: flex; align-items: center; justify-content: center; flex: none; }
.sb-v { height: 24px; }
.vthumb { height: 144px; margin-top: 3px; background: #fff; border: 1px solid #c8c8c8; }
.vtrack { flex: 1; background: #e6e6e6; }
.book .sb-v:last-child { margin-bottom: 1px; }
.hbar { height: 22px; background: #f3f3f3; display: flex; padding: 0 22px 0 55px; }
.sb-h { width: 25px; }
.hthumb { width: 381px; margin-left: 1px; background: #fff; border: 1px solid #c8c8c8; }
.htrack { flex: 1; background: #e6e6e6; }

/* Sheet tabs + status */
.sheetbar { height: 48px; background: #f3f3f3; display: flex; align-items: center; }
.st-prev { margin: 0 0 0 19px; }
.st-next { margin-left: 39px; }
.st-menu { margin-left: 33px; margin-top: -1px; }
.st-tab { margin-left: 29px; height: 48px; padding-top: 6px; line-height: 30px; width: 107px; border-bottom: 4px solid #217346; font-size: 21.500px; font-weight: 500; color: #444; white-space: nowrap; }
.st-add { margin-left: 28px; }
.status { height: 33px; border-top: 1px solid #e1e1e1; background: #fff; display: flex; align-items: center; padding: 3px 0 0 22px; font-size: 16px; color: #444; white-space: nowrap; line-height: 24px; }
.st-mode { width: 152px; word-spacing: 3px; }
.st-info { width: 122px; font-size: 15.500px; }
.st-chev { margin-left: 1105px; }
.st-fb { margin-left: 70px; width: 236px; font-size: 15.200px; }
.st-minus { margin-left: 69px; }
.st-zoom { margin-left: 15px; width: 50px; font-size: 18.500px; }
.st-plus { margin-left: 11px; }
```
